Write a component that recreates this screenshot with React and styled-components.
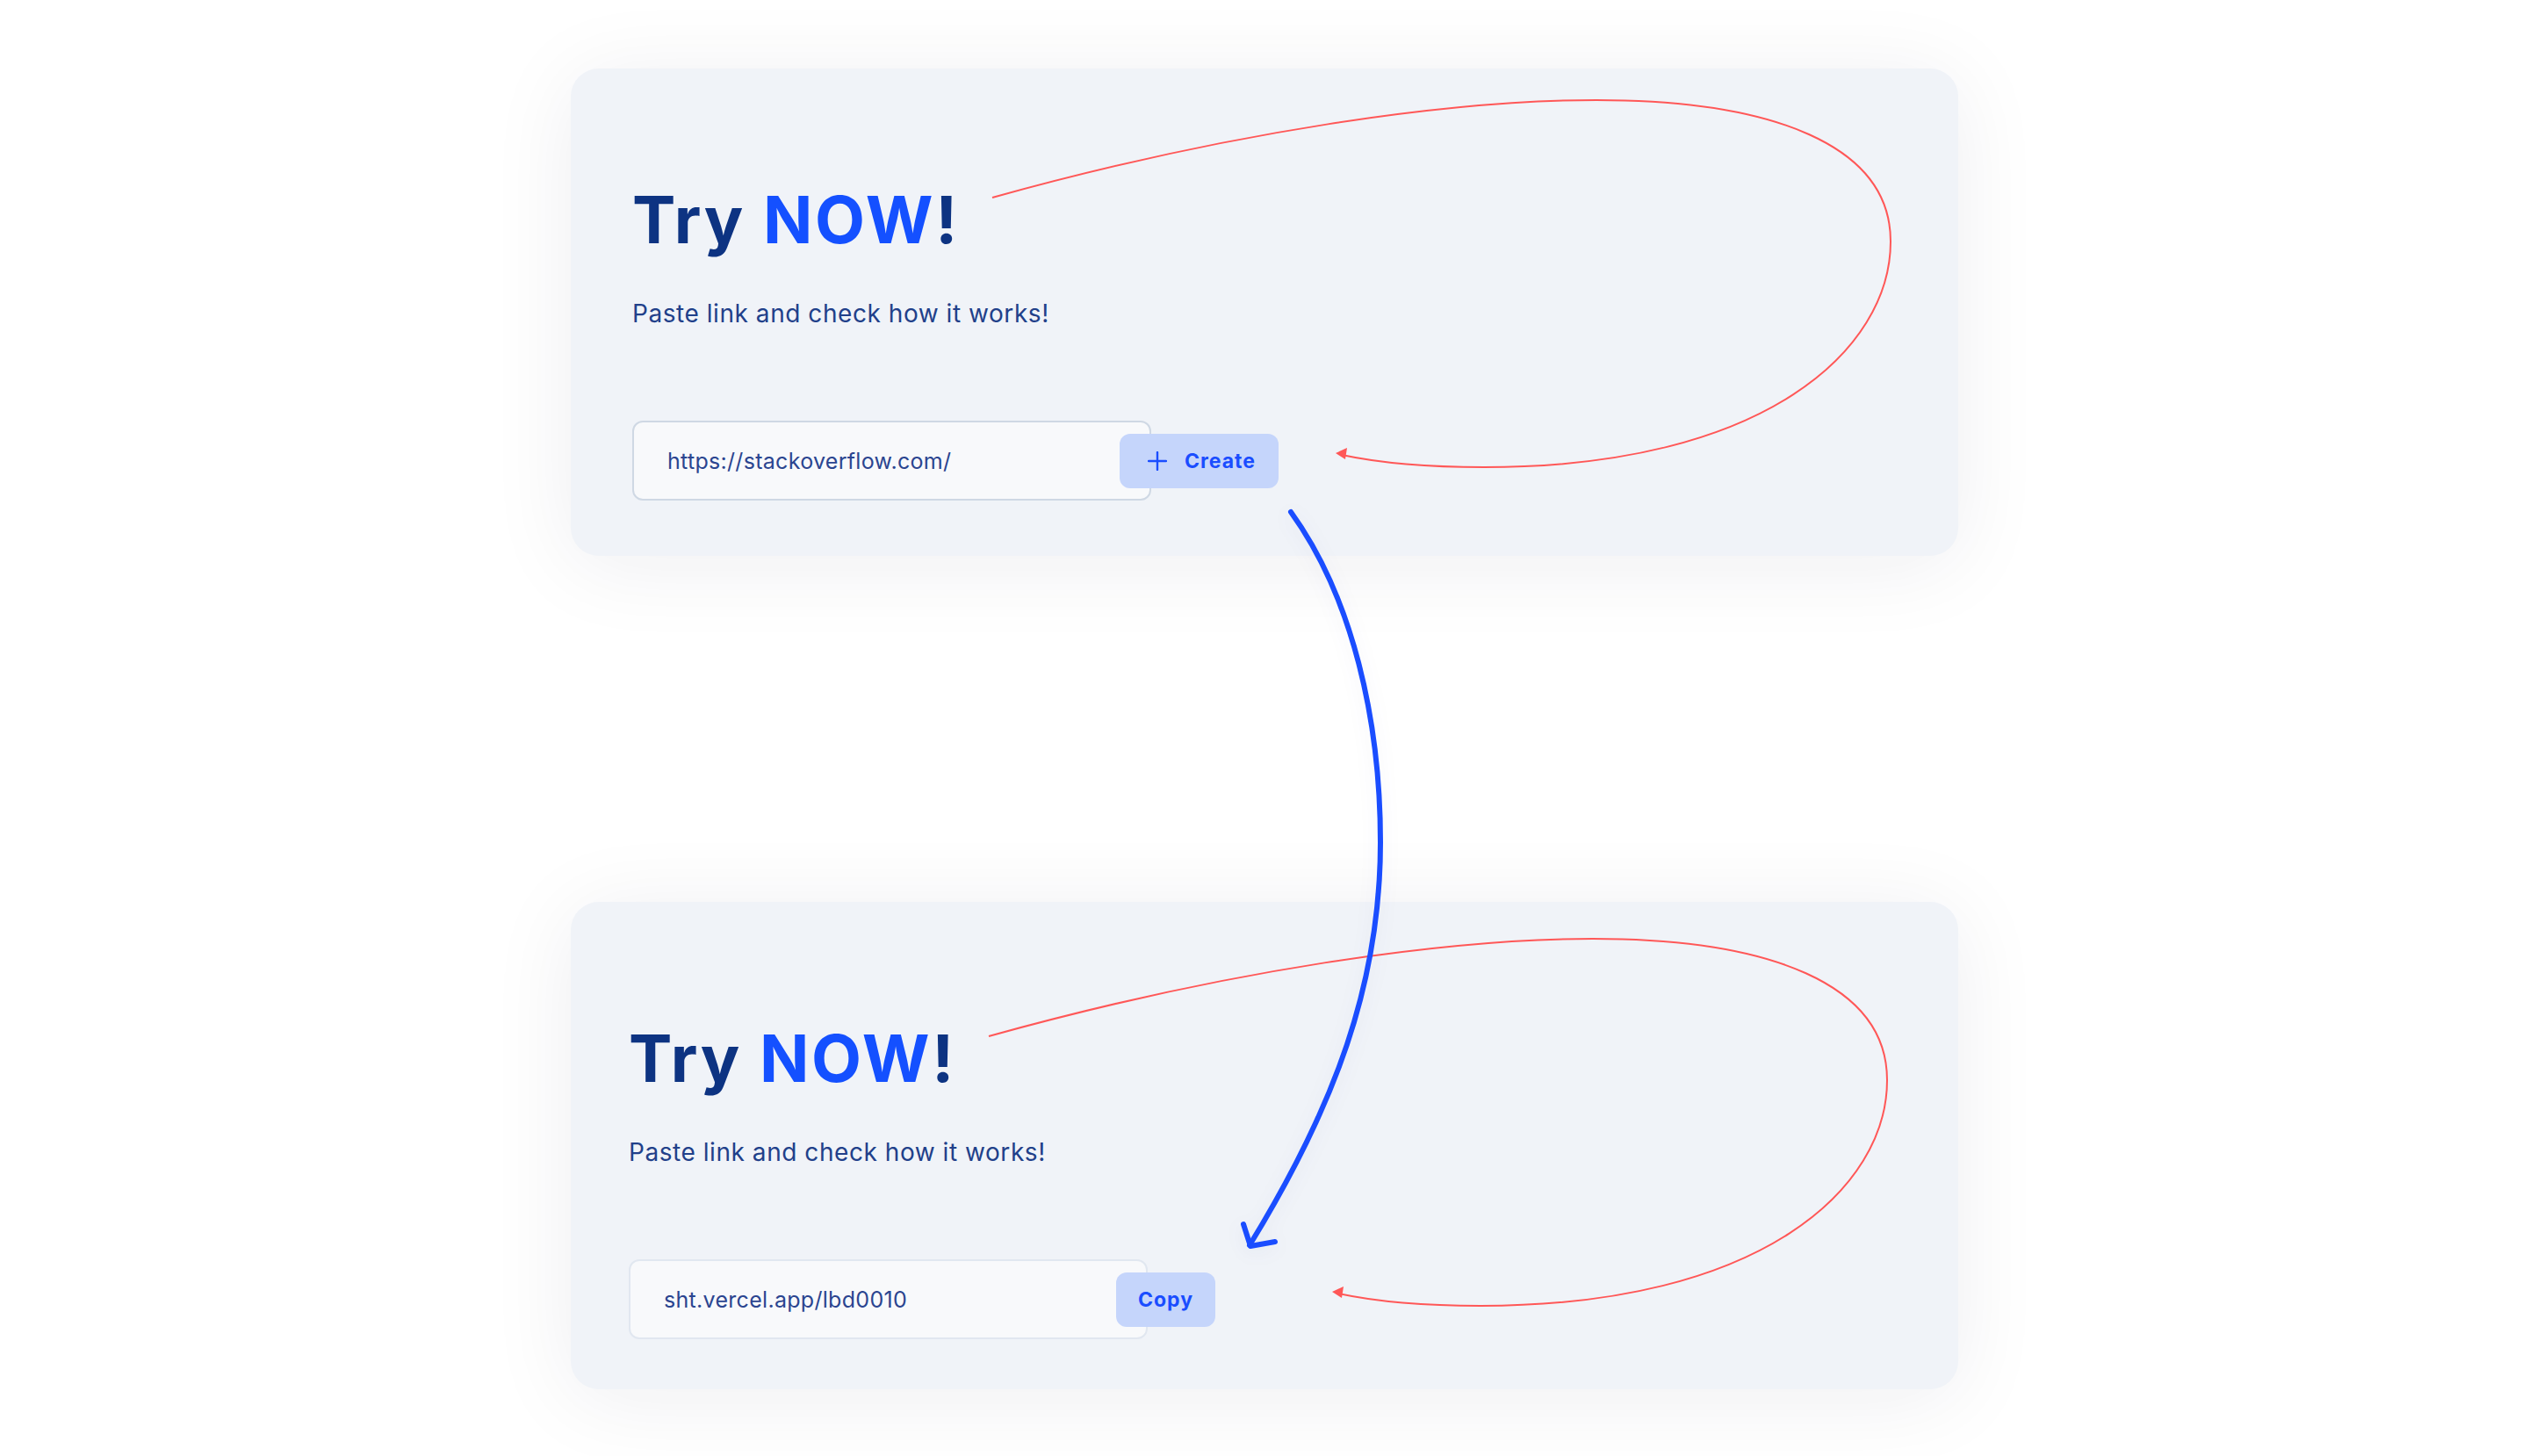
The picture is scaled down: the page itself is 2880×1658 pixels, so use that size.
import styled, { createGlobalStyle } from 'styled-components'

const GlobalStyle = createGlobalStyle`
    body {
        margin: 0;
        background: #ffffff;
        font-family: "Inter", "Liberation Sans", sans-serif;
    }
`

const Plus = () => (
    <svg width="22" height="22" viewBox="0 0 22 22">
        <path d="M11 1v20M1 11h20" stroke="#1a4dff" strokeWidth="2.4" strokeLinecap="round" fill="none"/>
    </svg>
)

const Scribble = () => (
    <Doodle width="1580" height="555" viewBox="0 0 1580 555">
        <path
            d="M480 147 C750 72, 1000 36, 1168 36 C1368 36, 1503 87, 1503 197 C1503 320, 1360 454, 1040 454 C970 454, 920 449, 878 440"
            stroke="#ff5757" strokeWidth="2" fill="none"
        />
        <path d="M871 438 L884 432 L882 445 Z" fill="#ff5757"/>
    </Doodle>
)

const TryCard = ({ shift, value, faded, children }) => {
    return (
        <Card>
            <Content $shift={shift}>
                <Scribble/>
                <Title>Try <Accent>NOW</Accent>!</Title>
                <Subtitle>Paste link and check how it works!</Subtitle>
                <Form>
                    <Field $faded={faded}>{value}</Field>
                    {children}
                </Form>
            </Content>
        </Card>
    )
}

const App = () => {
    return (
        <Page>
            <GlobalStyle/>
            <TryCard shift={0} value="https://stackoverflow.com/">
                <Button>
                    <Plus/>
                    Create
                </Button>
            </TryCard>
            <TryCard shift={6} faded value="sht.vercel.app/lbd0010">
                <Button $small>Copy</Button>
            </TryCard>

            <Arrow width="2880" height="1658" viewBox="0 0 2880 1658">
                <path
                    d="M1470 583 C1540 680, 1572 820, 1572 959 C1572 1120, 1520 1260, 1423 1418"
                    stroke="#1a4dff" strokeWidth="6" strokeLinecap="round" fill="none"
                />
                <path d="M1416 1394 L1424 1419 L1452 1414" stroke="#1a4dff" strokeWidth="6" strokeLinecap="round" strokeLinejoin="round" fill="none"/>
            </Arrow>
        </Page>
    )
}

export default App

const Page = styled.div`
    position: relative;
    min-height: 1658px;
    display: flex;
    flex-direction: column;
    align-items: center;
    gap: 394px;
    padding-top: 78px;
    box-sizing: border-box;
`

const Card = styled.div`
    width: 1580px;
    height: 555px;
    box-sizing: border-box;
    background-color: #f0f3f8;
    border-radius: 32px;
    box-shadow: 0 10px 100px rgba(30, 30, 50, 0.07);
`

const Content = styled.div`
    position: relative;
    height: 100%;
    box-sizing: border-box;
    padding: 135px 0 0 70px;
    transform: translate(${p => (p.$shift ? -4 : 0)}px, ${p => p.$shift}px);
`

const Doodle = styled.svg`
    position: absolute;
    left: 0;
    top: 0;
    overflow: visible;
    pointer-events: none;
`

const Title = styled.h1`
    margin: 0;
    font-size: 74px;
    line-height: 74px;
    font-weight: 700;
    letter-spacing: 2.6px;
    color: #0d3382;
`

const Accent = styled.span`
    color: #1450ff;
`

const Subtitle = styled.p`
    margin: 57px 0 0;
    font-size: 28px;
    line-height: 27px;
    font-weight: 400;
    letter-spacing: 0.55px;
    color: #21408a;
`

const Form = styled.div`
    display: flex;
    align-items: center;
    margin-top: 108px;
`

const Field = styled.div`
    width: 591px;
    height: 91px;
    box-sizing: border-box;
    display: flex;
    align-items: center;
    padding-left: 38px;
    border: 2px solid ${p => (p.$faded ? '#e1e7f0' : '#cfd8e4')};
    border-radius: 12px;
    background-color: #f8f9fb;
    font-size: 25px;
    letter-spacing: 0.3px;
    color: #2b4590;
`

const Button = styled.div`
    display: flex;
    align-items: center;
    gap: 20px;
    height: 62px;
    box-sizing: border-box;
    margin-left: -36px;
    padding: ${p => (p.$small ? '0 25px' : '0 26px 0 32px')};
    border-radius: 12px;
    background-color: #c5d5fb;
    font-size: 23px;
    font-weight: 700;
    letter-spacing: 1px;
    color: #1a4dff;
`

const Arrow = styled.svg`
    position: absolute;
    left: 0;
    top: 0;
    pointer-events: none;
    filter: drop-shadow(0 4px 10px rgba(20, 40, 120, 0.06));
`
